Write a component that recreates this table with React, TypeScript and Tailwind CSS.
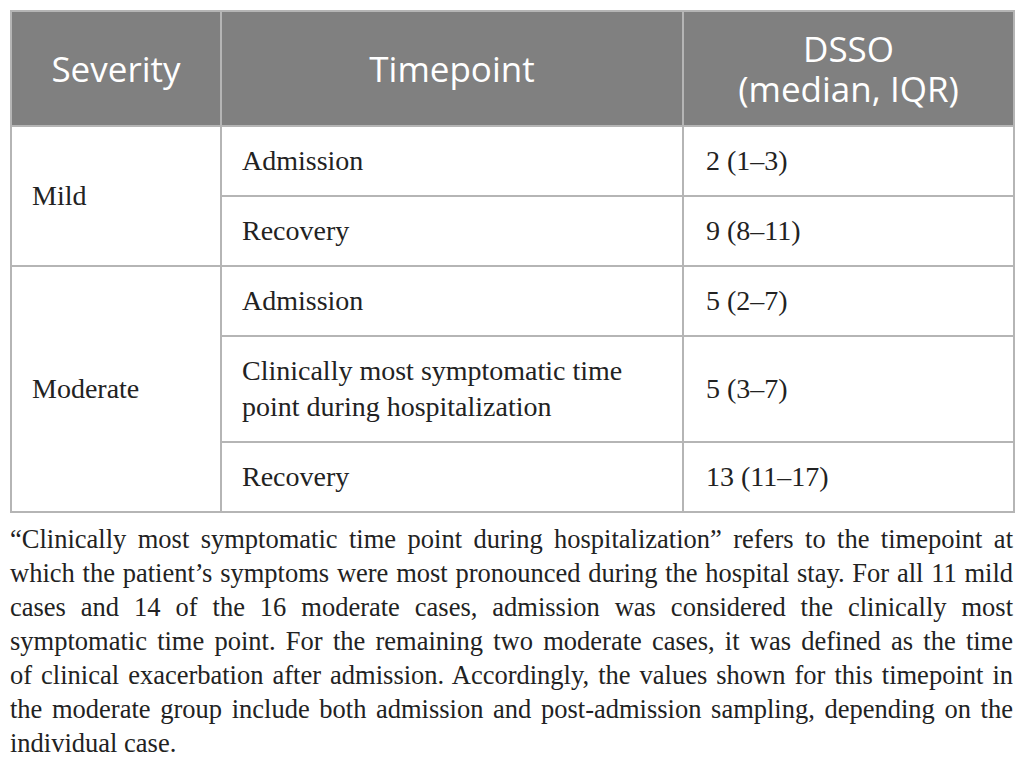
const rows = [
  { severity: "Mild", items: [["Admission", "2 (1–3)"], ["Recovery", "9 (8–11)"]] },
  {
    severity: "Moderate",
    items: [
      ["Admission", "5 (2–7)"],
      ["Clinically most symptomatic time|point during hospitalization", "5 (3–7)"],
      ["Recovery", "13 (11–17)"],
    ],
  },
];

const note = [
  "“Clinically most symptomatic time point during hospitalization” refers to the timepoint at",
  "which the patient’s symptoms were most pronounced during the hospital stay. For all 11 mild",
  "cases and 14 of the 16 moderate cases, admission was considered the clinically most",
  "symptomatic time point. For the remaining two moderate cases, it was defined as the time",
  "of clinical exacerbation after admission. Accordingly, the values shown for this timepoint in",
  "the moderate group include both admission and post-admission sampling, depending on the",
];

const serif = "font-['Liberation_Serif',_'Times_New_Roman',_serif]";

export default function App() {
  return (
    <div className="bg-white min-h-screen pt-[10px] pl-[10px] pr-[12px]">
      <table className="w-[1003px] border-collapse border-2 border-[#b5b5b5] table-fixed">
        <colgroup>
          <col className="w-[210px]" />
          <col className="w-[462px]" />
          <col className="w-[331px]" />
        </colgroup>
        <thead>
          <tr className="bg-[#808080] text-white font-['Open_Sans',_sans-serif] text-[35px] leading-[40px] h-[115px]">
            <th className="border-2 border-[#b5b5b5] font-normal">Severity</th>
            <th className="border-2 border-[#b5b5b5] font-normal">Timepoint</th>
            <th className="border-2 border-[#b5b5b5] font-normal">
              DSSO
              <br />
              (median, IQR)
            </th>
          </tr>
        </thead>
        <tbody className={`${serif} text-[28px] leading-[36px] text-[#222]`}>
          {rows.map((group) =>
            group.items.map(([time, value], i) => (
              <tr key={group.severity + i}>
                {i === 0 && (
                  <td
                    rowSpan={group.items.length}
                    className="border-2 border-[#b5b5b5] px-[20px] align-middle"
                  >
                    {group.severity}
                  </td>
                )}
                <td className="border-2 border-[#b5b5b5] pl-[20px] pr-[10px] py-[16px] whitespace-nowrap">
                  {time.split("|").map((line, k) => (
                    <div key={k}>{line}</div>
                  ))}
                </td>
                <td className="border-2 border-[#b5b5b5] px-[22px] py-[16px]">{value}</td>
              </tr>
            ))
          )}
        </tbody>
      </table>
      <div className={`${serif} text-[26.5px] leading-[34px] text-[#222] w-[1003px] mt-[9px]`}>
        {note.map((line, i) => (
          <p key={i} className="text-justify [text-align-last:justify]">
            {line}
          </p>
        ))}
        <p>individual case.</p>
      </div>
    </div>
  );
}
